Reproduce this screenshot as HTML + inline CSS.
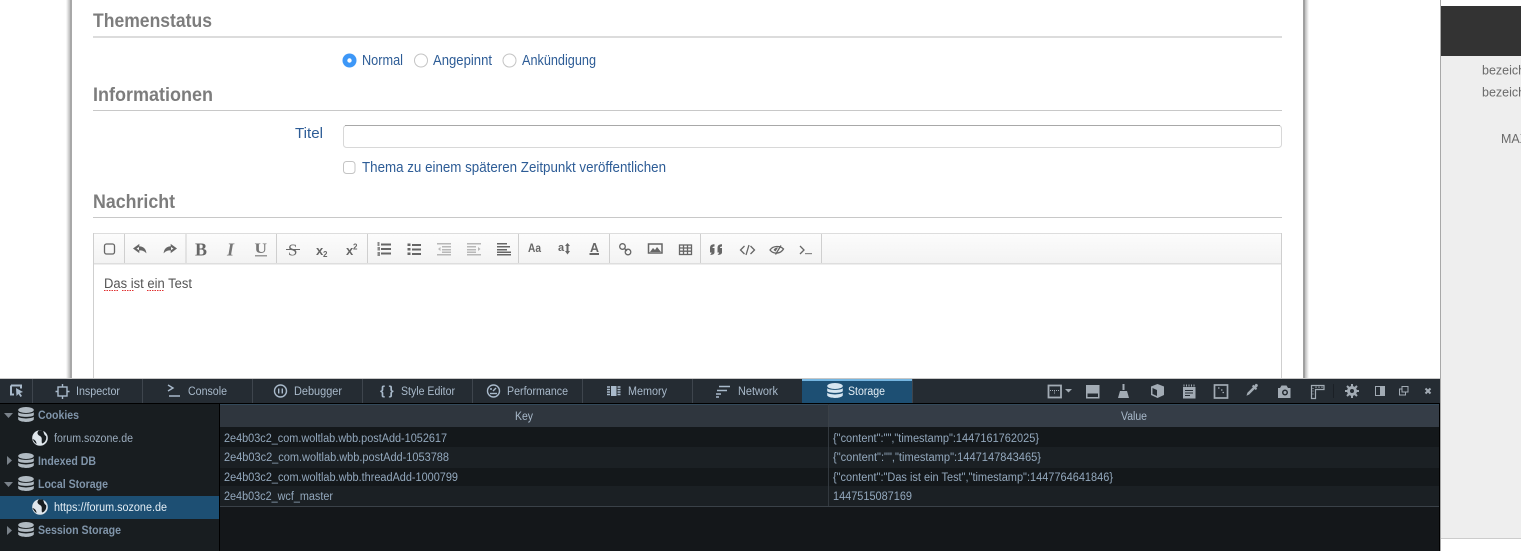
<!DOCTYPE html>
<html><head><meta charset="utf-8"><title>Neues Thema</title>
<style>
html,body{margin:0;padding:0;width:1521px;height:551px;overflow:hidden;background:#fff}
svg{display:block}
text{font-family:"Liberation Sans",sans-serif}
.h{font-size:19.500px;font-weight:bold;fill:#7d7d7d}
.l{font-size:14.500px;fill:#2d5c96}
.t{font-size:11.500px;fill:#a9bacb}
.k{font-size:11.500px;fill:#93a8bd}
.s{font-size:11.500px;font-weight:bold;fill:#8095aa}
.u{font-size:11.500px;fill:#9aabbc}
.i{fill:none;stroke:#666;stroke-width:1.3}
.d{fill:none;stroke:#a9bacb;stroke-width:1.400}
.f{fill:#a9bacb}
.g{fill:#a2abb4}
.gs{fill:none;stroke:#a2abb4}
.tb{stroke:#3e454d;stroke-width:1}
</style></head><body>
<svg width="1521" height="551" viewBox="0 0 1521 551" xmlns="http://www.w3.org/2000/svg">
<defs>
<linearGradient id="sr" x1="0" x2="1" y1="0" y2="0"><stop offset="0" stop-color="#bbb"/><stop offset="1" stop-color="#fff"/></linearGradient>
<linearGradient id="sl" x1="1" x2="0" y1="0" y2="0"><stop offset="0" stop-color="#bbb"/><stop offset="1" stop-color="#fff"/></linearGradient>
<linearGradient id="tbg" x1="0" x2="0" y1="0" y2="1"><stop offset="0" stop-color="#fcfcfc"/><stop offset="1" stop-color="#f3f3f3"/></linearGradient>
<g id="db"><ellipse cx="0" cy="-5" rx="7.800" ry="3"/><path d="M-7.800-2.800C-5.500-.6 5.500-.6 7.800-2.800V.2C5.500 2.400-5.500 2.400-7.800.2ZM-7.800 1.800C-5.500 4 5.500 4 7.800 1.800V4.500C5.500 7.800-5.500 7.800-7.800 4.500Z"/></g>
<g id="globe"><circle r="7.800" fill="#dfe6ec"/><path d="M-1-7.800C-4-5-2-3 0-2 3 0 1 2 2 5.500 5 5 7 1 6-2 4-3 4-5 3-7.500ZM-7.500 1C-5.500 1.500-3.500 3-3.500 6-5 5-6.500 3-7.500 1Z" fill="#181d20"/></g>
</defs>

<!-- page -->
<rect x="66" y="0" width="4" height="380" fill="url(#sl)"/>
<rect x="70" y="0" width="2" height="380" fill="#a8a8a8"/>
<rect x="1303" y="0" width="2" height="380" fill="#a0a0a0"/>
<rect x="1305" y="0" width="4" height="380" fill="url(#sr)"/>

<text class="h" x="93" y="27" textLength="119" lengthAdjust="spacingAndGlyphs">Themenstatus</text>
<rect x="93" y="36" width="1189" height="2" fill="#dcdcdc"/>
<circle cx="349.500" cy="60.500" r="7" fill="#3d97f7"/><circle cx="349.500" cy="60.500" r="2.200" fill="#fff"/>
<text class="l" x="362" y="65" textLength="41" lengthAdjust="spacingAndGlyphs">Normal</text>
<circle cx="421" cy="60.500" r="6.500" fill="#fff" stroke="#c4c4c4"/>
<text class="l" x="433" y="65" textLength="59" lengthAdjust="spacingAndGlyphs">Angepinnt</text>
<circle cx="509.500" cy="60.500" r="6.500" fill="#fff" stroke="#c4c4c4"/>
<text class="l" x="522" y="65" textLength="74" lengthAdjust="spacingAndGlyphs">Ankündigung</text>

<text class="h" x="93" y="101" textLength="120" lengthAdjust="spacingAndGlyphs">Informationen</text>
<rect x="93" y="110" width="1189" height="1" fill="#c8c8c8"/>
<text class="l" x="295" y="138" textLength="28" lengthAdjust="spacingAndGlyphs">Titel</text>
<rect x="343.500" y="125.500" width="938" height="22" rx="3" fill="#fff" stroke="#d8d8d8"/>
<path d="M345 125.500H1280" stroke="#a8a8a8" fill="none"/>
<rect x="343.500" y="161.500" width="11.500" height="12" rx="3" fill="#fff" stroke="#c4c4c4"/>
<text class="l" x="362" y="172" textLength="304" lengthAdjust="spacingAndGlyphs">Thema zu einem späteren Zeitpunkt veröffentlichen</text>

<text class="h" x="93" y="208" textLength="82" lengthAdjust="spacingAndGlyphs">Nachricht</text>
<rect x="93" y="217" width="1189" height="1" fill="#c8c8c8"/>

<!-- editor -->
<rect x="93.500" y="233.500" width="1188" height="150" fill="#fff" stroke="#cfcfcf"/>
<rect x="94" y="234" width="1187" height="29" fill="url(#tbg)"/>
<rect x="94" y="233" width="1187" height="1" fill="#ddd"/>
<rect x="94" y="263" width="1187" height="1.500" fill="#dedede"/>
<g fill="#cfcfcf">
<rect x="124" y="234" width="1" height="29"/><rect x="185.500" y="234" width="1" height="29"/><rect x="276" y="234" width="1" height="29"/><rect x="367" y="234" width="1" height="29"/><rect x="518" y="234" width="1" height="29"/><rect x="609" y="234" width="1" height="29"/><rect x="700" y="234" width="1" height="29"/><rect x="821" y="234" width="1" height="29"/>
</g>
<!-- toolbar icons -->
<rect x="104.500" y="244" width="10" height="10" rx="2" class="i" stroke-width="1.500"/>
<path d="M139 244.500l-5.500 4 5.500 4v-2.500c3 0 5 .5 7 2.500-.5-3.500-3-6-7-6z" fill="#666" stroke="#666" stroke-width=".6"/><path d="M139 247l-2.500 1.600 2.500 1.500z" fill="#f8f8f8"/>
<path d="M171 244.500l5.500 4-5.500 4v-2.500c-3 0-5 .5-7 2.500 .5-3.500 3-6 7-6z" fill="#666" stroke="#666" stroke-width=".6"/><path d="M171 247l2.500 1.600-2.500 1.500z" fill="#f8f8f8"/>
<text x="195" y="255.500" style="font-family:'Liberation Serif',serif;font-size:18px;font-weight:bold" fill="#666" textLength="12" lengthAdjust="spacingAndGlyphs">B</text>
<text x="227" y="255.500" style="font-family:'Liberation Serif',serif;font-size:18px;font-style:italic;font-weight:bold" fill="#777">I</text>
<text x="254.500" y="253" style="font-family:'Liberation Serif',serif;font-size:15px;font-weight:bold" fill="#777" textLength="12.500" lengthAdjust="spacingAndGlyphs">U</text><rect x="255" y="255" width="12" height="1.500" fill="#999"/>
<text x="288" y="255.500" style="font-family:'Liberation Serif',serif;font-size:17px" fill="#666">S</text><rect x="286" y="249" width="14" height="1" fill="#666"/>
<text x="316" y="255" style="font-size:13px;font-weight:bold" fill="#666">x</text><text x="323" y="257" style="font-size:8px;font-weight:bold" fill="#666">2</text>
<text x="346" y="255" style="font-size:13px;font-weight:bold" fill="#666">x</text><text x="353" y="249.500" style="font-size:8px;font-weight:bold" fill="#666">2</text>
<g fill="#666"><rect x="381" y="243.500" width="10" height="2"/><rect x="381" y="248" width="10" height="2"/><rect x="381" y="252.500" width="10" height="2"/></g>
<g fill="#888"><rect x="377.500" y="242" width="2" height="4"/><rect x="377.500" y="247" width="2.500" height="3.500"/><rect x="377.500" y="252" width="2.500" height="4"/></g>
<g fill="#666"><rect x="407.500" y="243.500" width="3" height="2.500"/><rect x="407.500" y="248" width="3" height="2.500"/><rect x="407.500" y="252.500" width="3" height="2.500"/><rect x="412" y="244" width="9" height="2"/><rect x="412" y="248.500" width="9" height="2"/><rect x="412" y="253" width="9" height="2"/></g>
<g fill="#b8b8b8"><rect x="437" y="243" width="14" height="1.500"/><rect x="442" y="246" width="9" height="1.500"/><rect x="442" y="249" width="9" height="1.500"/><rect x="442" y="251.500" width="9" height="1.500"/><rect x="437" y="254" width="14" height="1.500"/><path d="M440.500 247v4l-2.500-2z"/>
<rect x="467" y="243" width="14" height="1.500"/><rect x="467" y="246" width="9" height="1.500"/><rect x="467" y="249" width="9" height="1.500"/><rect x="467" y="251.500" width="9" height="1.500"/><rect x="467" y="254" width="14" height="1.500"/><path d="M478 247v4l2.500-2z"/></g>
<g fill="#666"><rect x="497" y="243" width="10" height="1.500"/><rect x="497" y="246" width="13" height="1.500"/><rect x="497" y="249" width="10" height="1.500"/><rect x="497" y="251.500" width="14" height="1.500"/><rect x="497" y="254" width="14" height="1.500"/></g>
<text x="528" y="252" style="font-size:12px;font-weight:bold" fill="#666" textLength="13" lengthAdjust="spacingAndGlyphs">Aa</text>
<text x="558" y="251" style="font-size:11px;font-weight:bold" fill="#666">a</text><path d="M567.500 243l2.500 3h-1.500v5h1.500l-2.500 3.500-2.500-3.500h1.500v-5h-1.500z" fill="#666"/>
<text x="590" y="252" style="font-size:13px;font-weight:bold" fill="#666" textLength="9" lengthAdjust="spacingAndGlyphs">A</text><rect x="589.500" y="253" width="9.500" height="2" fill="#666"/>
<g class="i" stroke-width="1.600"><circle cx="622.500" cy="246.500" r="2.800"/><circle cx="628" cy="252" r="2.800"/><path d="M624 248l3 3"/></g>
<rect x="648.500" y="244" width="13.500" height="9" fill="none" stroke="#666" stroke-width="1.500"/><path d="M650 252l3-4 2 2 2-3 4 5z" fill="#666"/>
<rect x="679.500" y="245" width="12" height="9.500" class="i"/><path d="M679.500 248H692M679.500 251.200H692M683.500 245v9M687.500 245v9" class="i" stroke-width=".9"/>
<path d="M710 255c1.200-1 1.500-2 1.500-2.500H710v-4.500c0-2.500 1.500-3.700 4.500-3.700v2.200c-1.500 0-2 .5-2 1.500h2v4.500c0 1.500-2 2.500-4.500 2.500zM717.500 255c1.200-1 1.500-2 1.500-2.500h-1.500v-4.500c0-2.500 1.500-3.700 4.500-3.700v2.200c-1.500 0-2 .5-2 1.500h2v4.500c0 1.500-2 2.500-4.500 2.500z" fill="#666"/>
<path d="M744.500 246l-4 4 4 4M750.500 246l4 4-4 4" class="i" stroke-width="1"/><path d="M746 255l3-10" class="i" stroke-width="1"/>
<path d="M770 250c3-4.500 10-4.500 13.500-1-3 5-10 5.500-13.500 1z" class="i"/><path d="M775.500 254.500l5.500-9" class="i" stroke-width="1.600"/><path d="M773.500 250c1-2 3-2.500 4.500-2.500l-2.500 4z" fill="#666"/>
<path d="M800 246l4 4-4 4" class="i" stroke-width="1.100"/><rect x="805" y="253" width="7" height="1.200" fill="#888"/>
<text x="104" y="288" font-size="13.500" fill="#555" textLength="88" lengthAdjust="spacingAndGlyphs">Das ist ein Test</text>
<path d="M104 290.500h15M122 290.500h11.500M147 290.500h17" stroke="#e03030" stroke-dasharray="1.500 1" fill="none"/>

<!-- right panel -->
<rect x="1440" y="0" width="81" height="540" fill="#eeeeee"/>
<rect x="1440" y="0" width="1" height="551" fill="#a8a8a8"/>
<rect x="1441" y="0" width="80" height="6" fill="#fff"/>
<rect x="1441" y="6" width="80" height="50" fill="#333"/>
<rect x="1441" y="538" width="80" height="1" fill="#ccc"/>
<rect x="1441" y="539" width="80" height="12" fill="#fff"/>
<text x="1482" y="74.500" font-size="12.500" fill="#6a6a6a">bezeichnung</text>
<text x="1482" y="96.500" font-size="12.500" fill="#6a6a6a">bezeichnung</text>
<text x="1501" y="143" font-size="12.500" fill="#6a6a6a">MAX</text>

<!-- devtools -->
<rect x="0" y="378" width="1440" height="1" fill="#c8c8c8"/>
<rect x="0" y="379" width="1440" height="172" fill="#14171a"/>
<rect x="0" y="379" width="1440" height="24" fill="#252c33"/>
<rect x="0" y="403" width="1440" height="1" fill="#000"/>
<g class="tb">
<path d="M32.500 379v24M142.500 379v24M252.500 379v24M362.500 379v24M472.500 379v24M582.500 379v24M692.500 379v24M912.500 379v24"/>
</g>
<rect x="802" y="379" width="110" height="24" fill="#1d4f73"/>
<rect x="802" y="379" width="110" height="2" fill="#75b5e0"/>
<path d="M1333.500 384v14" stroke="#1b2026"/>

<!-- tab icons -->
<path d="M11 385.500h10v3M11 385.500v9h3" fill="none" stroke="#a9bacb" stroke-width="2"/><path d="M16 388l7 4-3 1 2 3-1.500 1-2-3-2 2z" fill="#a9bacb"/>
<rect x="58" y="387" width="9" height="9" class="d" stroke-width="2"/><path d="M62.500 384v3M62.500 396v3M55.500 391.500h3M66.500 391.500h3" class="d" stroke-width="1.800"/>
<path d="M168 385l5 3-5 3M169 396h11" class="d"/>
<circle cx="280.500" cy="391" r="6" class="d" stroke-width="1.700"/><path d="M278.700 388.500v5M282.300 388.500v5" class="d" stroke-width="1.600"/>
<text x="380" y="395" font-size="13" font-weight="bold" style="fill:#a9bacb">{ }</text>
<circle cx="493.500" cy="391" r="6" class="d" stroke-width="2"/><path d="M493 391l3-3" class="d"/><circle cx="491" cy="389" r="1" class="f"/><path d="M490 393.500h7" class="d"/>
<rect x="611" y="386" width="5.500" height="10" class="f"/><path d="M607 387h3M607 389.500h3M607 392h3M607 394.500h3M617.500 387h3M617.500 389.500h3M617.500 392h3M617.500 394.500h3" class="d" stroke-width="1"/>
<path d="M719 386.500h11M717 390.500h10M716 394h5M716 397h3" class="d" stroke-width="1.300"/>
<use href="#db" x="835" y="391" fill="#d6e5f0"/>

<text class="t" x="76" y="395" textLength="44" lengthAdjust="spacingAndGlyphs">Inspector</text>
<text class="t" x="188" y="395" textLength="39" lengthAdjust="spacingAndGlyphs">Console</text>
<text class="t" x="294" y="395" textLength="48" lengthAdjust="spacingAndGlyphs">Debugger</text>
<text class="t" x="401" y="395" textLength="54" lengthAdjust="spacingAndGlyphs">Style Editor</text>
<text class="t" x="507" y="395" textLength="61" lengthAdjust="spacingAndGlyphs">Performance</text>
<text class="t" x="628" y="395" textLength="39" lengthAdjust="spacingAndGlyphs">Memory</text>
<text class="t" x="738" y="395" textLength="40" lengthAdjust="spacingAndGlyphs">Network</text>
<text x="848" y="395" font-size="11.500" fill="#e4eef5" textLength="37" lengthAdjust="spacingAndGlyphs">Storage</text>

<!-- right toolbar icons -->
<g>
<rect x="1048.500" y="385.500" width="12.500" height="12" class="gs" stroke-width="1.800"/><path d="M1050 390.500h9M1054.500 390.500v3" class="gs" stroke-width="1" stroke-dasharray="1 1"/>
<path d="M1065 389h7l-3.500 3.500z" class="g"/>
<rect x="1086" y="385" width="13.500" height="13.500" class="g"/><rect x="1087.500" y="393.500" width="10.500" height="3.500" fill="#252c33"/>
<path d="M1123.500 384v6" stroke="#a2abb4" stroke-width="2"/><path d="M1120 391h7l2 7h-11z" class="g"/>
<path d="M1157.500 384l6.500 2.500v8.500l-6.500 3-6.500-3v-8.500z" class="g"/><path d="M1152.500 388l4.500 2v6l-4.500-2z" fill="#252c33"/>
<rect x="1183" y="387" width="12.500" height="11.500" class="g"/><path d="M1184 384.500v2M1186.500 384.500v2M1189 384.500v2M1191.500 384.500v2M1194 384.500v2" class="gs" stroke-width="1"/><path d="M1185 390.500h8M1185 393h8M1185 395.500h5" stroke="#252c33"/>
<rect x="1214.500" y="385" width="13" height="13" class="gs" stroke-width="1.700"/><path d="M1218 388h1.500M1221 390h1.500M1222.500 392.500h1.500" class="gs" stroke-width="1.200"/>
<path d="M1255.500 384c1.500-.5 2.800.800 2.200 2.200l-1.500 1.500 1 1-1.500 1.300-1-1-5.500 5.500-2.700 1.200 .9-2.900 5.500-5.500-1-1 1.500-1.500 1 1z" class="g"/>
<path d="M1278 388h2l1.500-2.500h5l1.500 2.500h2.500v10H1278z" class="g"/><circle cx="1285" cy="392.500" r="3" fill="#252c33"/><circle cx="1285" cy="392.500" r="1.500" class="g"/>
<path d="M1311.500 398.500v-13H1324v4h-8.500v9z" class="gs" stroke-width="1.200"/><path d="M1313 388v1M1316 386.500v1.500M1319 386.500v1.500M1322 386.500v1.500M1312.500 391h1M1312.500 394h1" class="gs" stroke-width="1"/>
<circle cx="1352" cy="391" r="5" class="g"/><path d="M1352 384v14M1345 391h14M1347 386l10 10M1357 386l-10 10" stroke="#a2abb4" stroke-width="2"/><circle cx="1352" cy="391" r="2" fill="#252c33"/>
<rect x="1375.500" y="386.500" width="9" height="9" class="gs" stroke-width="1"/><rect x="1380" y="386.500" width="4.500" height="9" class="g"/>
<rect x="1402" y="386.500" width="6" height="5.500" class="gs" stroke-width="1"/><path d="M1402 389h-2.500v6h6v-3" class="gs" stroke-width="1"/>
<path d="M1425.500 388.500l5 5M1430.500 388.500l-5 5" class="gs" stroke-width="2"/>
</g>

<!-- sidebar -->
<rect x="0" y="404" width="219" height="147" fill="#181d20"/>
<rect x="219" y="404" width="1" height="147" fill="#000"/>
<rect x="0" y="496" width="219" height="23" fill="#1d4f73"/>
<g fill="#7a828a">
<path d="M4 413h9l-4.500 5z"/><path d="M4 482h9l-4.500 5z"/>
<path d="M7 456v9l5-4.500z"/><path d="M7 526v9l5-4.500z"/>
</g>
<g fill="#b0bac2">
<use href="#db" x="26" y="415"/><use href="#db" x="26" y="461"/><use href="#db" x="26" y="484"/><use href="#db" x="26" y="530"/>
</g>
<use href="#globe" x="40" y="438"/>
<use href="#globe" x="40" y="507"/>
<text class="s" x="38" y="419" textLength="41" lengthAdjust="spacingAndGlyphs">Cookies</text>
<text class="u" x="54" y="442" textLength="79" lengthAdjust="spacingAndGlyphs">forum.sozone.de</text>
<text class="s" x="38" y="465" textLength="58" lengthAdjust="spacingAndGlyphs">Indexed DB</text>
<text class="s" x="38" y="488" textLength="70" lengthAdjust="spacingAndGlyphs">Local Storage</text>
<text x="54" y="511" font-size="11.500" fill="#e4eef5" textLength="113" lengthAdjust="spacingAndGlyphs">https://forum.sozone.de</text>
<text class="s" x="38" y="534" textLength="83" lengthAdjust="spacingAndGlyphs">Session Storage</text>

<!-- table -->
<rect x="220" y="404" width="608" height="23" fill="#2f363e"/>
<rect x="829" y="404" width="610" height="23" fill="#353d47"/>
<rect x="220" y="404" width="1219" height="1" fill="#33495a"/>
<rect x="828" y="404" width="1" height="102" fill="#3a4148"/>
<rect x="220" y="427" width="1219" height="20" fill="#14181b"/>
<rect x="220" y="447" width="1219" height="21" fill="#1b2024"/>
<rect x="220" y="468" width="1219" height="18" fill="#14181b"/>
<rect x="220" y="486" width="1219" height="20" fill="#1b2024"/>
<rect x="828" y="427" width="1" height="79" fill="#33393f"/>
<rect x="220" y="506" width="1219" height="1" fill="#3a4148"/>
<rect x="1439" y="404" width="1" height="147" fill="#000"/>
<text x="515" y="420" font-size="11.500" fill="#a9bacb" textLength="18" lengthAdjust="spacingAndGlyphs">Key</text>
<text x="1121" y="420" font-size="11.500" fill="#a9bacb" textLength="26" lengthAdjust="spacingAndGlyphs">Value</text>
<text class="k" x="224" y="442" textLength="223" lengthAdjust="spacingAndGlyphs">2e4b03c2_com.woltlab.wbb.postAdd-1052617</text>
<text class="k" x="224" y="461" textLength="225" lengthAdjust="spacingAndGlyphs">2e4b03c2_com.woltlab.wbb.postAdd-1053788</text>
<text class="k" x="224" y="481" textLength="234" lengthAdjust="spacingAndGlyphs">2e4b03c2_com.woltlab.wbb.threadAdd-1000799</text>
<text class="k" x="224" y="500" textLength="109" lengthAdjust="spacingAndGlyphs">2e4b03c2_wcf_master</text>
<text class="k" x="833" y="442" textLength="206" lengthAdjust="spacingAndGlyphs">{"content":"","timestamp":1447161762025}</text>
<text class="k" x="833" y="461" textLength="208" lengthAdjust="spacingAndGlyphs">{"content":"","timestamp":1447147843465}</text>
<text class="k" x="833" y="481" textLength="280" lengthAdjust="spacingAndGlyphs">{"content":"Das ist ein Test","timestamp":1447764641846}</text>
<text class="k" x="833" y="500" textLength="79" lengthAdjust="spacingAndGlyphs">1447515087169</text>
</svg>
</body></html>
